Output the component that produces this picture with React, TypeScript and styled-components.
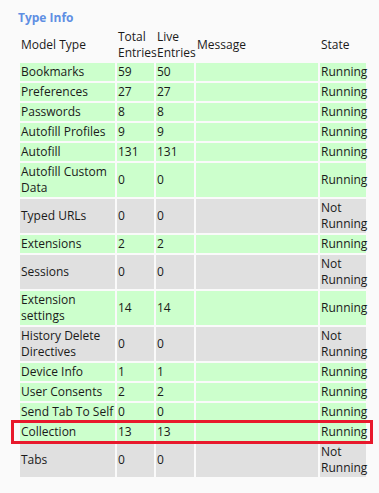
import React from "react";
import styled, { createGlobalStyle } from "styled-components";

const Global = createGlobalStyle`
  html, body { margin: 0; padding: 0; background: #fafafa; }
  body { font-family: "Open Sans", "Noto Sans", sans-serif; color: #1a1a1a; }
`;

const Page = styled.div`
  position: relative;
  padding: 9px 0 0 18px;
`;

const Title = styled.h2`
  margin: 0;
  font-size: 12px;
  line-height: 18px;
  font-weight: 700;
  color: #5f8fe3;
`;

const Table = styled.table`
  border-collapse: separate;
  border-spacing: 2px;
  table-layout: fixed;
  width: 350px;
  font-size: 12px;
  line-height: 16px;
`;

const Th = styled.th<{ $w: number }>`
  width: ${(p) => p.$w - 2}px;
  padding: 0 1px;
  text-align: left;
  font-weight: 400;
  vertical-align: middle;
`;

const Td = styled.td<{ $state: "on" | "off" }>`
  padding: 1px 1px;
  vertical-align: middle;
  background: ${(p) => (p.$state === "on" ? "#ccffcc" : "#e0e0e0")};
`;

const Highlight = styled.div`
  position: absolute;
  left: 11px;
  top: 420px;
  width: 362px;
  height: 24px;
  box-sizing: border-box;
  border: 3px solid #e8192c;
  pointer-events: none;
`;

type Row = { name: string; total: string; live: string; running: boolean };

const rows: Row[] = [
  { name: "Bookmarks", total: "59", live: "50", running: true },
  { name: "Preferences", total: "27", live: "27", running: true },
  { name: "Passwords", total: "8", live: "8", running: true },
  { name: "Autofill Profiles", total: "9", live: "9", running: true },
  { name: "Autofill", total: "131", live: "131", running: true },
  { name: "Autofill Custom Data", total: "0", live: "0", running: true },
  { name: "Typed URLs", total: "0", live: "0", running: false },
  { name: "Extensions", total: "2", live: "2", running: true },
  { name: "Sessions", total: "0", live: "0", running: false },
  { name: "Extension settings", total: "14", live: "14", running: true },
  { name: "History Delete Directives", total: "0", live: "0", running: false },
  { name: "Device Info", total: "1", live: "1", running: true },
  { name: "User Consents", total: "2", live: "2", running: true },
  { name: "Send Tab To Self", total: "0", live: "0", running: true },
  { name: "Collection", total: "13", live: "13", running: true },
  { name: "Tabs", total: "0", live: "0", running: false },
];

export default function App() {
  return (
    <Page>
      <Global />
      <Title>Type Info</Title>
      <Table>
        <thead>
          <tr>
            <Th $w={95}>Model Type</Th>
            <Th $w={37}>Total Entries</Th>
            <Th $w={38}>Live Entries</Th>
            <Th $w={122}>Message</Th>
            <Th $w={46}>State</Th>
          </tr>
        </thead>
        <tbody>
          {rows.map((r) => {
            const s = r.running ? "on" : "off";
            return (
              <tr key={r.name}>
                <Td $state={s}>{r.name}</Td>
                <Td $state={s}>{r.total}</Td>
                <Td $state={s}>{r.live}</Td>
                <Td $state={s}></Td>
                <Td $state={s}>{r.running ? "Running" : "Not Running"}</Td>
              </tr>
            );
          })}
        </tbody>
      </Table>
      <Highlight />
    </Page>
  );
}
